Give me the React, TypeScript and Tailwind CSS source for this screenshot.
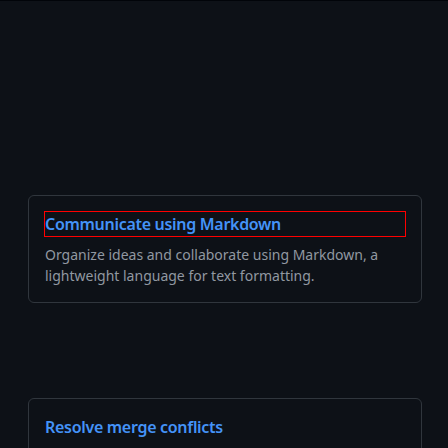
const cards = [
  {
    title: "Communicate using Markdown",
    body: "Organize ideas and collaborate using Markdown, a lightweight language for text formatting.",
    focused: true,
  },
  {
    title: "Resolve merge conflicts",
    body: "",
    focused: false,
  },
];

export default function App() {
  return (
    <div
      className="h-[448px] w-[448px] overflow-hidden bg-[#0d1117] border-t border-[#010409]"
      style={{ fontFamily: '"Noto Sans", "Open Sans", sans-serif' }}
    >
      <div className="flex flex-col gap-[95px] pt-[194px] pl-7 pr-[26px]">
        {cards.map((card) => (
          <div
            key={card.title}
            className="rounded-md border border-[#30363d] p-4"
          >
            <h3
              className={
                "text-base font-semibold leading-6 tracking-[-0.3px] text-[#4493f8] " +
                (card.focused ? "outline outline-1 outline-[#ff0000]" : "")
              }
            >
              {card.title}
            </h3>
            {card.body && (
              <p className="mt-2 text-sm leading-[21px] text-[#9198a1]">{card.body}</p>
            )}
          </div>
        ))}
      </div>
    </div>
  );
}
